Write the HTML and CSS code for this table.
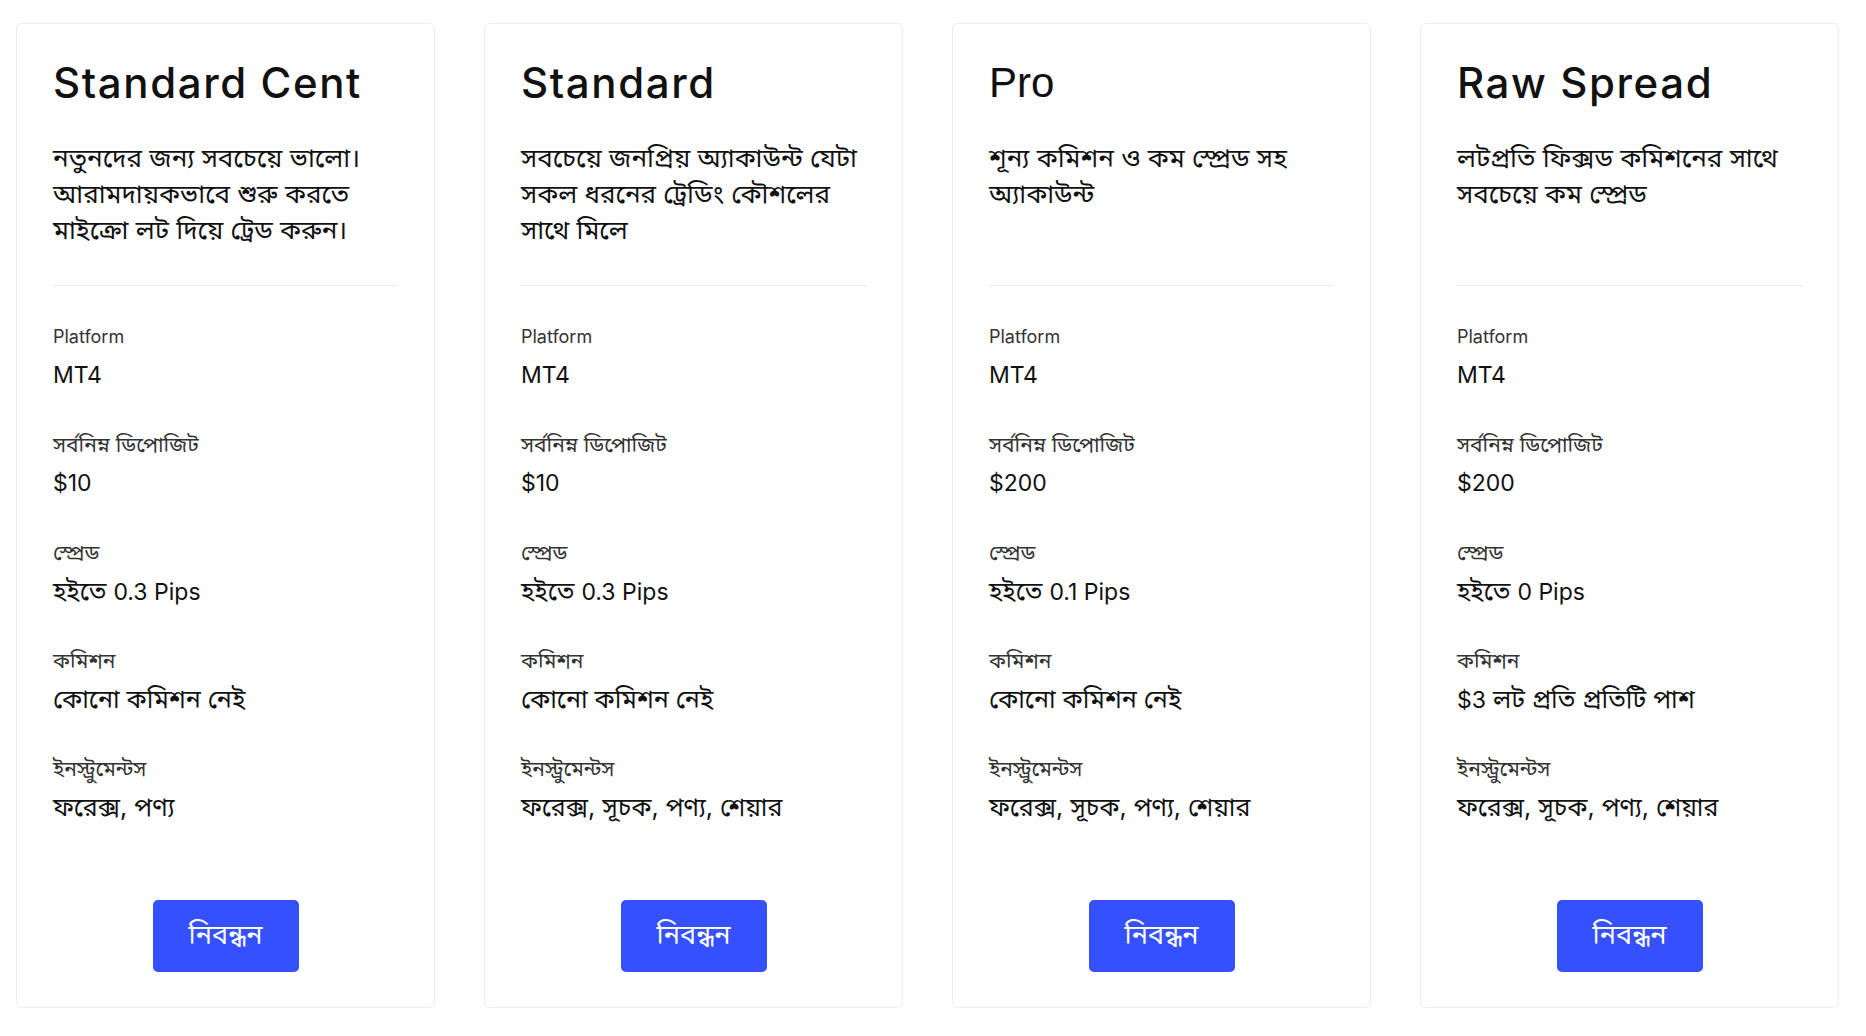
FILE: index.html
```html
<!DOCTYPE html>
<html lang="bn">
<head>
<meta charset="utf-8">
<title>Accounts</title>
<link rel="stylesheet" href="styles.css">
</head>
<body>
<main class="plans">
  <section class="card">
    <h2 class="title">Standard Cent</h2>
    <p class="desc">নতুনদের জন্য সবচেয়ে ভালো। আরামদায়কভাবে শুরু করতে মাইক্রো লট দিয়ে ট্রেড করুন।</p>
    <hr class="rule">
    <dl class="specs">
      <div class="spec"><dt class="lat">Platform</dt><dd class="lat">MT4</dd></div>
      <div class="spec"><dt>সর্বনিম্ন ডিপোজিট</dt><dd class="lat">$10</dd></div>
      <div class="spec"><dt>স্প্রেড</dt><dd>হইতে <span class="lat">0.3 Pips</span></dd></div>
      <div class="spec"><dt>কমিশন</dt><dd>কোনো কমিশন নেই</dd></div>
      <div class="spec"><dt>ইনস্ট্রুমেন্টস</dt><dd>ফরেক্স, পণ্য</dd></div>
    </dl>
    <div class="action"><a class="btn" href="#">নিবন্ধন</a></div>
  </section>
  <section class="card">
    <h2 class="title">Standard</h2>
    <p class="desc">সবচেয়ে জনপ্রিয় অ্যাকাউন্ট যেটা সকল ধরনের ট্রেডিং কৌশলের সাথে মিলে</p>
    <hr class="rule">
    <dl class="specs">
      <div class="spec"><dt class="lat">Platform</dt><dd class="lat">MT4</dd></div>
      <div class="spec"><dt>সর্বনিম্ন ডিপোজিট</dt><dd class="lat">$10</dd></div>
      <div class="spec"><dt>স্প্রেড</dt><dd>হইতে <span class="lat">0.3 Pips</span></dd></div>
      <div class="spec"><dt>কমিশন</dt><dd>কোনো কমিশন নেই</dd></div>
      <div class="spec"><dt>ইনস্ট্রুমেন্টস</dt><dd>ফরেক্স, সূচক, পণ্য, শেয়ার</dd></div>
    </dl>
    <div class="action"><a class="btn" href="#">নিবন্ধন</a></div>
  </section>
  <section class="card">
    <h2 class="title title-alt">Pro</h2>
    <p class="desc">শূন্য কমিশন ও কম স্প্রেড সহ অ্যাকাউন্ট</p>
    <hr class="rule">
    <dl class="specs">
      <div class="spec"><dt class="lat">Platform</dt><dd class="lat">MT4</dd></div>
      <div class="spec"><dt>সর্বনিম্ন ডিপোজিট</dt><dd class="lat">$200</dd></div>
      <div class="spec"><dt>স্প্রেড</dt><dd>হইতে <span class="lat">0.1 Pips</span></dd></div>
      <div class="spec"><dt>কমিশন</dt><dd>কোনো কমিশন নেই</dd></div>
      <div class="spec"><dt>ইনস্ট্রুমেন্টস</dt><dd>ফরেক্স, সূচক, পণ্য, শেয়ার</dd></div>
    </dl>
    <div class="action"><a class="btn" href="#">নিবন্ধন</a></div>
  </section>
  <section class="card">
    <h2 class="title">Raw Spread</h2>
    <p class="desc">লটপ্রতি ফিক্সড কমিশনের সাথে সবচেয়ে কম স্প্রেড</p>
    <hr class="rule">
    <dl class="specs">
      <div class="spec"><dt class="lat">Platform</dt><dd class="lat">MT4</dd></div>
      <div class="spec"><dt>সর্বনিম্ন ডিপোজিট</dt><dd class="lat">$200</dd></div>
      <div class="spec"><dt>স্প্রেড</dt><dd>হইতে <span class="lat">0 Pips</span></dd></div>
      <div class="spec"><dt>কমিশন</dt><dd><span class="lat">$3</span> লট প্রতি প্রতিটি পাশ</dd></div>
      <div class="spec"><dt>ইনস্ট্রুমেন্টস</dt><dd>ফরেক্স, সূচক, পণ্য, শেয়ার</dd></div>
    </dl>
    <div class="action"><a class="btn" href="#">নিবন্ধন</a></div>
  </section>
</main>
</body>
</html>
```
FILE: styles.css
```css
* { box-sizing: border-box; }
html, body { margin: 0; padding: 0; background: #ffffff; }
body {
  font-family: Inter, "Noto Sans Bengali", "Lohit Bengali", "FreeSans", "Noto Sans", sans-serif;
  color: #111111;
}
.plans {
  display: grid;
  grid-template-columns: repeat(4, 419px);
  column-gap: 49px;
  align-items: start;
  padding: 23px 0 0 16px;
}
.card {
  border: 1px solid #ececec;
  border-radius: 6px;
  padding: 36px 36px 35px;
  background: #fff;
}
.title {
  margin: 0;
  font-size: 42px;
  line-height: 46px;
  font-weight: 500;
  color: #111;
  letter-spacing: 1.6px;
}
.title-alt {
  font-family: "Liberation Sans", Arial, sans-serif;
  font-weight: 400;
  letter-spacing: 0;
}
.desc {
  margin: 34px 0 0;
  min-height: 108px;
  font-size: 26px;
  line-height: 36px;
  color: #111;
}
.rule {
  margin: 37px 0 37px;
  border: 0;
  border-top: 1px solid #ececec;
  height: 0;
}
.specs { margin: 0; }
.spec { margin-bottom: 39px; }
.spec dt {
  height: 27px;
  font-size: 21px;
  line-height: 27px;
  color: #333;
  margin-bottom: 8px;
}
.spec dt.lat { font-size: 18px; }
.spec dd {
  margin: 0;
  height: 34px;
  font-size: 25px;
  line-height: 34px;
  color: #111;
}
.spec dd.lat, .spec dd .lat { font-size: 23px; }
.action {
  display: flex;
  justify-content: center;
  margin-top: 76px;
}
.btn {
  display: flex;
  align-items: center;
  justify-content: center;
  width: 146px;
  height: 72px;
  border-radius: 5px;
  background: #3450ff;
  color: #fff;
  font-size: 27px;
  text-decoration: none;
}
```
